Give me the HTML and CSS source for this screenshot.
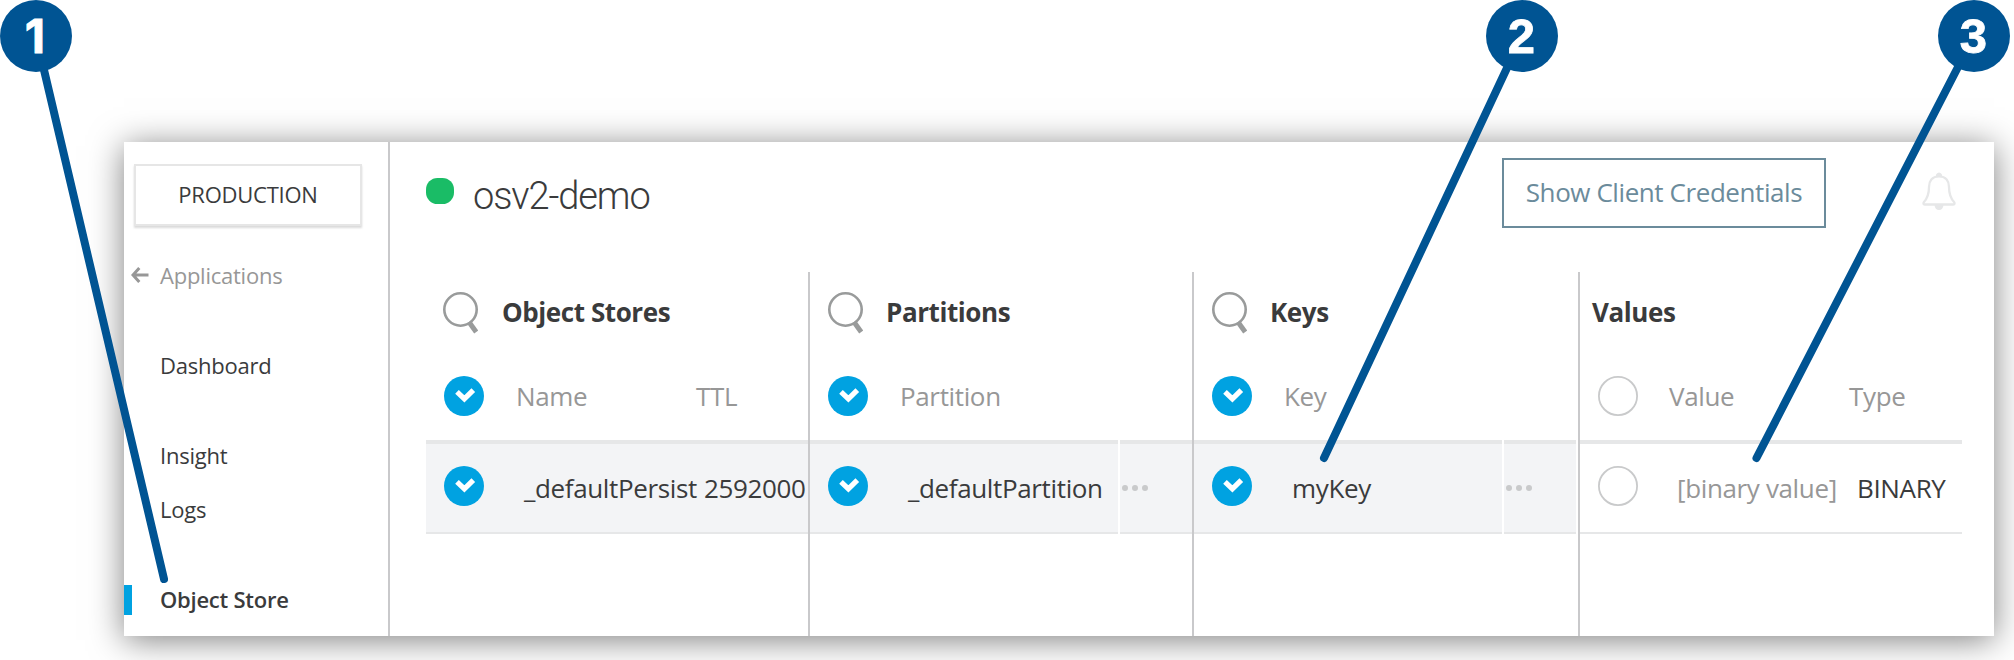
FILE: index.html
```html
<!DOCTYPE html>
<html lang="en">
<head>
<meta charset="utf-8">
<title>Object Store</title>
<link rel="stylesheet" href="styles.css">
</head>
<body>
<svg class="defs" aria-hidden="true">
  <symbol id="search" viewBox="0 0 36 44">
    <circle cx="18.5" cy="19.5" r="16.2" fill="none" stroke="#999b9b" stroke-width="2.6"/>
    <path d="M27 32L34.2 42" stroke="#999b9b" stroke-width="5"/>
  </symbol>
  <symbol id="check" viewBox="0 0 40 40">
    <circle cx="20" cy="20" r="20" fill="#00a2e1"/>
    <path d="M13 15.800L20.400 22.900L29.300 14.200" fill="none" stroke="#fff" stroke-width="5.2"/>
  </symbol>
  <symbol id="empty" viewBox="0 0 40 40">
    <circle cx="20" cy="20" r="19.1" fill="#fff" stroke="#c9cacb" stroke-width="1.8"/>
  </symbol>
</svg>

<div class="panel">
  <nav class="sidebar">
    <div class="env"><span>PRODUCTION</span></div>
    <a class="nav back"><svg class="arrow" viewBox="0 0 18 16"><path d="M2 8H17.5M8.3 1L2 8L8.3 15" fill="none" stroke="#979797" stroke-width="3"/></svg><span>Applications</span></a>
    <a class="nav dashboard">Dashboard</a>
    <a class="nav insight">Insight</a>
    <a class="nav logs">Logs</a>
    <a class="nav active">Object Store</a>
  </nav>

  <main class="main">
    <header class="header">
      <span class="status"></span>
      <h1 class="title">osv2-demo</h1>
      <button class="credentials"><span>Show Client Credentials</span></button>
      <svg class="bell" viewBox="0 0 34 38" fill="none" stroke="#e6e7e8" stroke-width="2.300">
        <path d="M15.2 4.5V3Q17 0.5 18.8 3V4.5M17 4.3C10 4.3 7 9 7 15C7 22.500 5 27 1.600 30.500Q1 32.500 3 32.500H31Q33 32.500 32.400 30.500C29 27 27 22.500 27 15C27 9 24 4.300 17 4.300Z"/>
        <path d="M12.500 33H21.500Q21 38 17 38Q13 38 12.500 33Z" fill="#e6e7e8" stroke="none"/>
      </svg>
    </header>

    <div class="columns">
      <section class="col first">
        <div class="col-title"><svg class="search"><use href="#search"/></svg><h2>Object Stores</h2></div>
        <div class="labels"><svg class="check"><use href="#check"/></svg><span class="label">Name</span><span class="label">TTL</span></div>
        <div class="row selected"><svg class="check"><use href="#check"/></svg><span class="cell">_defaultPersist</span><span class="cell second">2592000</span></div>
      </section>
      <section class="col">
        <div class="col-title"><svg class="search"><use href="#search"/></svg><h2>Partitions</h2></div>
        <div class="labels"><svg class="check"><use href="#check"/></svg><span class="label">Partition</span></div>
        <div class="split">
          <div class="row selected"><svg class="check"><use href="#check"/></svg><span class="cell">_defaultPartition</span></div>
          <div class="row selected more"><i></i><i></i><i></i></div>
        </div>
      </section>
      <section class="col keys">
        <div class="col-title"><svg class="search"><use href="#search"/></svg><h2>Keys</h2></div>
        <div class="labels"><svg class="check"><use href="#check"/></svg><span class="label">Key</span></div>
        <div class="split">
          <div class="row selected"><svg class="check"><use href="#check"/></svg><span class="cell">myKey</span></div>
          <div class="row selected more"><i></i><i></i><i></i></div>
        </div>
      </section>
      <section class="col values">
        <div class="col-title"><h2>Values</h2></div>
        <div class="labels"><svg class="check"><use href="#empty"/></svg><span class="label">Value</span><span class="label">Type</span></div>
        <div class="row"><svg class="check"><use href="#empty"/></svg><span class="cell muted">[binary value]</span><span class="cell second">BINARY</span></div>
      </section>
    </div>
  </main>
</div>

<svg class="callouts" viewBox="0 0 2014 660">
  <g stroke="#005493" stroke-width="8" stroke-linecap="round">
    <path d="M36 36L164 579"/>
    <path d="M1522 36L1324 458"/>
    <path d="M1974 36L1756.500 458"/>
  </g>
  <g fill="#005493">
    <circle cx="36" cy="36" r="36"/>
    <circle cx="1522" cy="36" r="36"/>
    <circle cx="1974" cy="36" r="36"/>
  </g>
  <g class="digits">
    <text class="one" x="35" y="53">1</text>
    <text x="1521.500" y="53">2</text>
    <text x="1973.500" y="53">3</text>
  </g>
</svg>
</body>
</html>
```
FILE: styles.css
```css
* { box-sizing: border-box; }

body {
  margin: 0;
  width: 2014px;
  height: 660px;
  overflow: hidden;
  position: relative;
  padding: 142px 20px 24px 124px;
  background: #fff;
  color: #3a3b3c;
  font-family: "Open Sans", "Noto Sans", sans-serif;
}

h1, h2 { margin: 0; }
.defs { position: absolute; width: 0; height: 0; }

.panel {
  display: flex;
  height: 494px;
  background: #fff;
  box-shadow: 0 4px 32px rgba(0, 0, 0, .5);
}

/* Sidebar */
.sidebar {
  flex: none;
  width: 266px;
  padding-top: 22px;
  border-right: 2px solid #c9c9cb;
  font-size: 22px;
  letter-spacing: -.24px;
}

.env {
  display: flex;
  align-items: center;
  justify-content: center;
  width: 228px;
  height: 62px;
  margin-left: 10px;
  padding-bottom: 2px;
  border: 2px solid #e6e6e6;
  box-shadow: 0 2px 2px rgba(0, 0, 0, .15);
}

.nav {
  display: flex;
  align-items: center;
  height: 30px;
  padding-left: 36px;
  line-height: 30px;
}

.back { margin-top: 34px; padding-left: 7px; color: #979797; }
.arrow { width: 18px; height: 16px; margin-right: 11px; }
.dashboard { margin-top: 60px; }
.insight { margin-top: 60px; }
.logs { margin-top: 24px; }
.active {
  margin-top: 61px;
  padding: 0 0 2px 28px;
  border-left: 8px solid #00a2e1;
  font-weight: 600;
  line-height: 28px;
}

/* Header */
.main { flex: 1; padding-left: 36px; }

.header {
  display: flex;
  align-items: flex-start;
  height: 130px;
  padding-top: 16px;
}

.status {
  width: 28px;
  height: 26px;
  margin-top: 20px;
  border-radius: 11.5px;
  background: #1abc66;
}

.title {
  width: 1029px;
  margin: 14px 0 0 19px;
  font: 300 38px/48px Roboto, sans-serif;
  letter-spacing: -1.1px;
}

.credentials {
  width: 324px;
  height: 70px;
  padding: 0 0 2px;
  border: 2px solid #6b8b9b;
  background: #fff;
  color: #6b8b9b;
  font: 26px/36px "Open Sans", sans-serif;
  letter-spacing: -.42px;
  white-space: nowrap;
}

.bell { width: 34px; height: 38px; margin: 14px 0 0 96px; }

/* Columns */
.columns {
  display: grid;
  grid-template-columns: 384px 384px 386px 382px;
  height: 364px;
  font-size: 26px;
  line-height: 36px;
  letter-spacing: -.36px;
}

.col { border-right: 2px solid #c9c9cb; white-space: nowrap; }
.values { border-right: 0; }
.keys .split { width: 382px; }

.col-title {
  display: flex;
  align-items: center;
  height: 80px;
  padding-left: 17px;
}

.col-title h2 { font-size: 26px; line-height: 36px; font-weight: 700; letter-spacing: -.42px; }
.search { width: 36px; height: 44px; margin-right: 23px; }
.first .col-title { padding-left: 16px; }
.first .search { margin-right: 24px; }
.values .col-title { padding-left: 12px; }

.labels, .row { display: flex; align-items: center; padding-left: 18px; }
.labels { height: 88px; color: #979797; }
.check { flex: none; width: 40px; height: 40px; margin-right: 32px; }
.label { flex: none; width: 180px; }
.labels .label + .label { width: 90px; }

.row {
  height: 94px;
  border-top: 4px solid #e6e7e8;
  border-bottom: 2px solid #e6e7e8;
}

.row .check { margin: -4px 40px 0 0; }
.values .labels .check { margin-right: 31px; }
.values .row .check { margin-right: 39px; }
.selected { background: #f3f4f6; }
.cell { width: 180px; }
.cell.second { width: 100px; }
.muted { color: #979797; }

.split { display: grid; grid-template-columns: 308px 1fr; gap: 2px; }
.more { gap: 4px; padding-left: 2px; }
.more i { width: 6px; height: 6px; border-radius: 50%; background: #c9cacb; }

/* Numbered callouts over the panel */
.callouts { position: absolute; left: 0; top: 0; width: 2014px; height: 660px; }
.digits {
  fill: #fff;
  stroke: #fff;
  stroke-width: .8px;
  font: 700 49px "Liberation Sans", sans-serif;
  text-anchor: middle;
}
.digits .one { font-family: Inter, sans-serif; font-size: 47px; }
```
